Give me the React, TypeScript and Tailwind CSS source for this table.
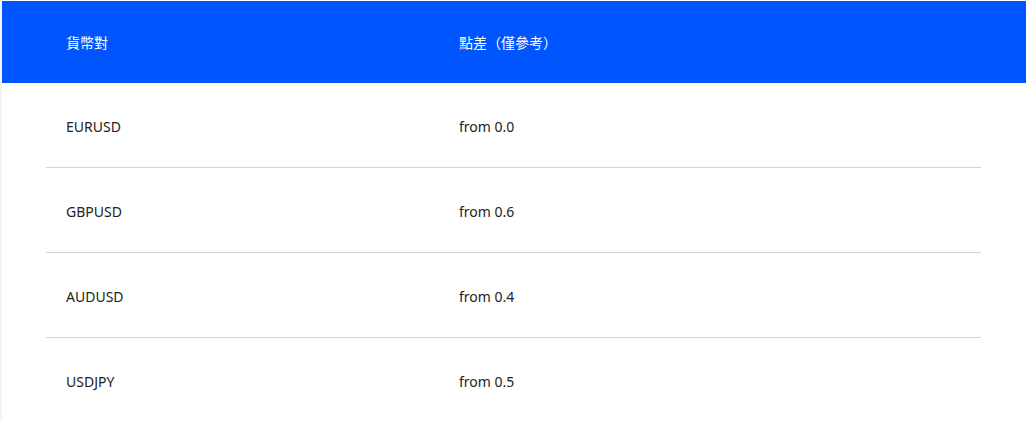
import React from "react";

const rows = [
  ["EURUSD", "from 0.0"],
  ["GBPUSD", "from 0.6"],
  ["AUDUSD", "from 0.4"],
  ["USDJPY", "from 0.5"],
];

export default function App() {
  return (
    <div
      className="h-[422px] overflow-hidden bg-white pt-px border-l-[2px] border-[#f4f4f4]"
      style={{ fontFamily: '"Noto Sans", "Noto Sans CJK TC", sans-serif' }}
    >
      <div className="flex h-[82px] items-center bg-[#0055ff] text-[14px] text-white">
        <div className="w-[457px] pl-[64px]">貨幣對</div>
        <div>點差（僅參考）</div>
      </div>
      <div className="ml-[44px] mr-[45px]">
        {rows.map(([pair, spread], i) => (
          <div
            key={pair}
            className={
              i < rows.length - 1
                ? "flex h-[85px] items-center border-b border-[#d4d4d4] text-[14px] text-[#222]"
                : "flex h-[85px] items-center text-[14px] text-[#222]"
            }
          >
            <div className="w-[413px] pl-[20px] pt-[2px]">{pair}</div>
            <div className="pt-[2px]">{spread}</div>
          </div>
        ))}
      </div>
    </div>
  );
}
